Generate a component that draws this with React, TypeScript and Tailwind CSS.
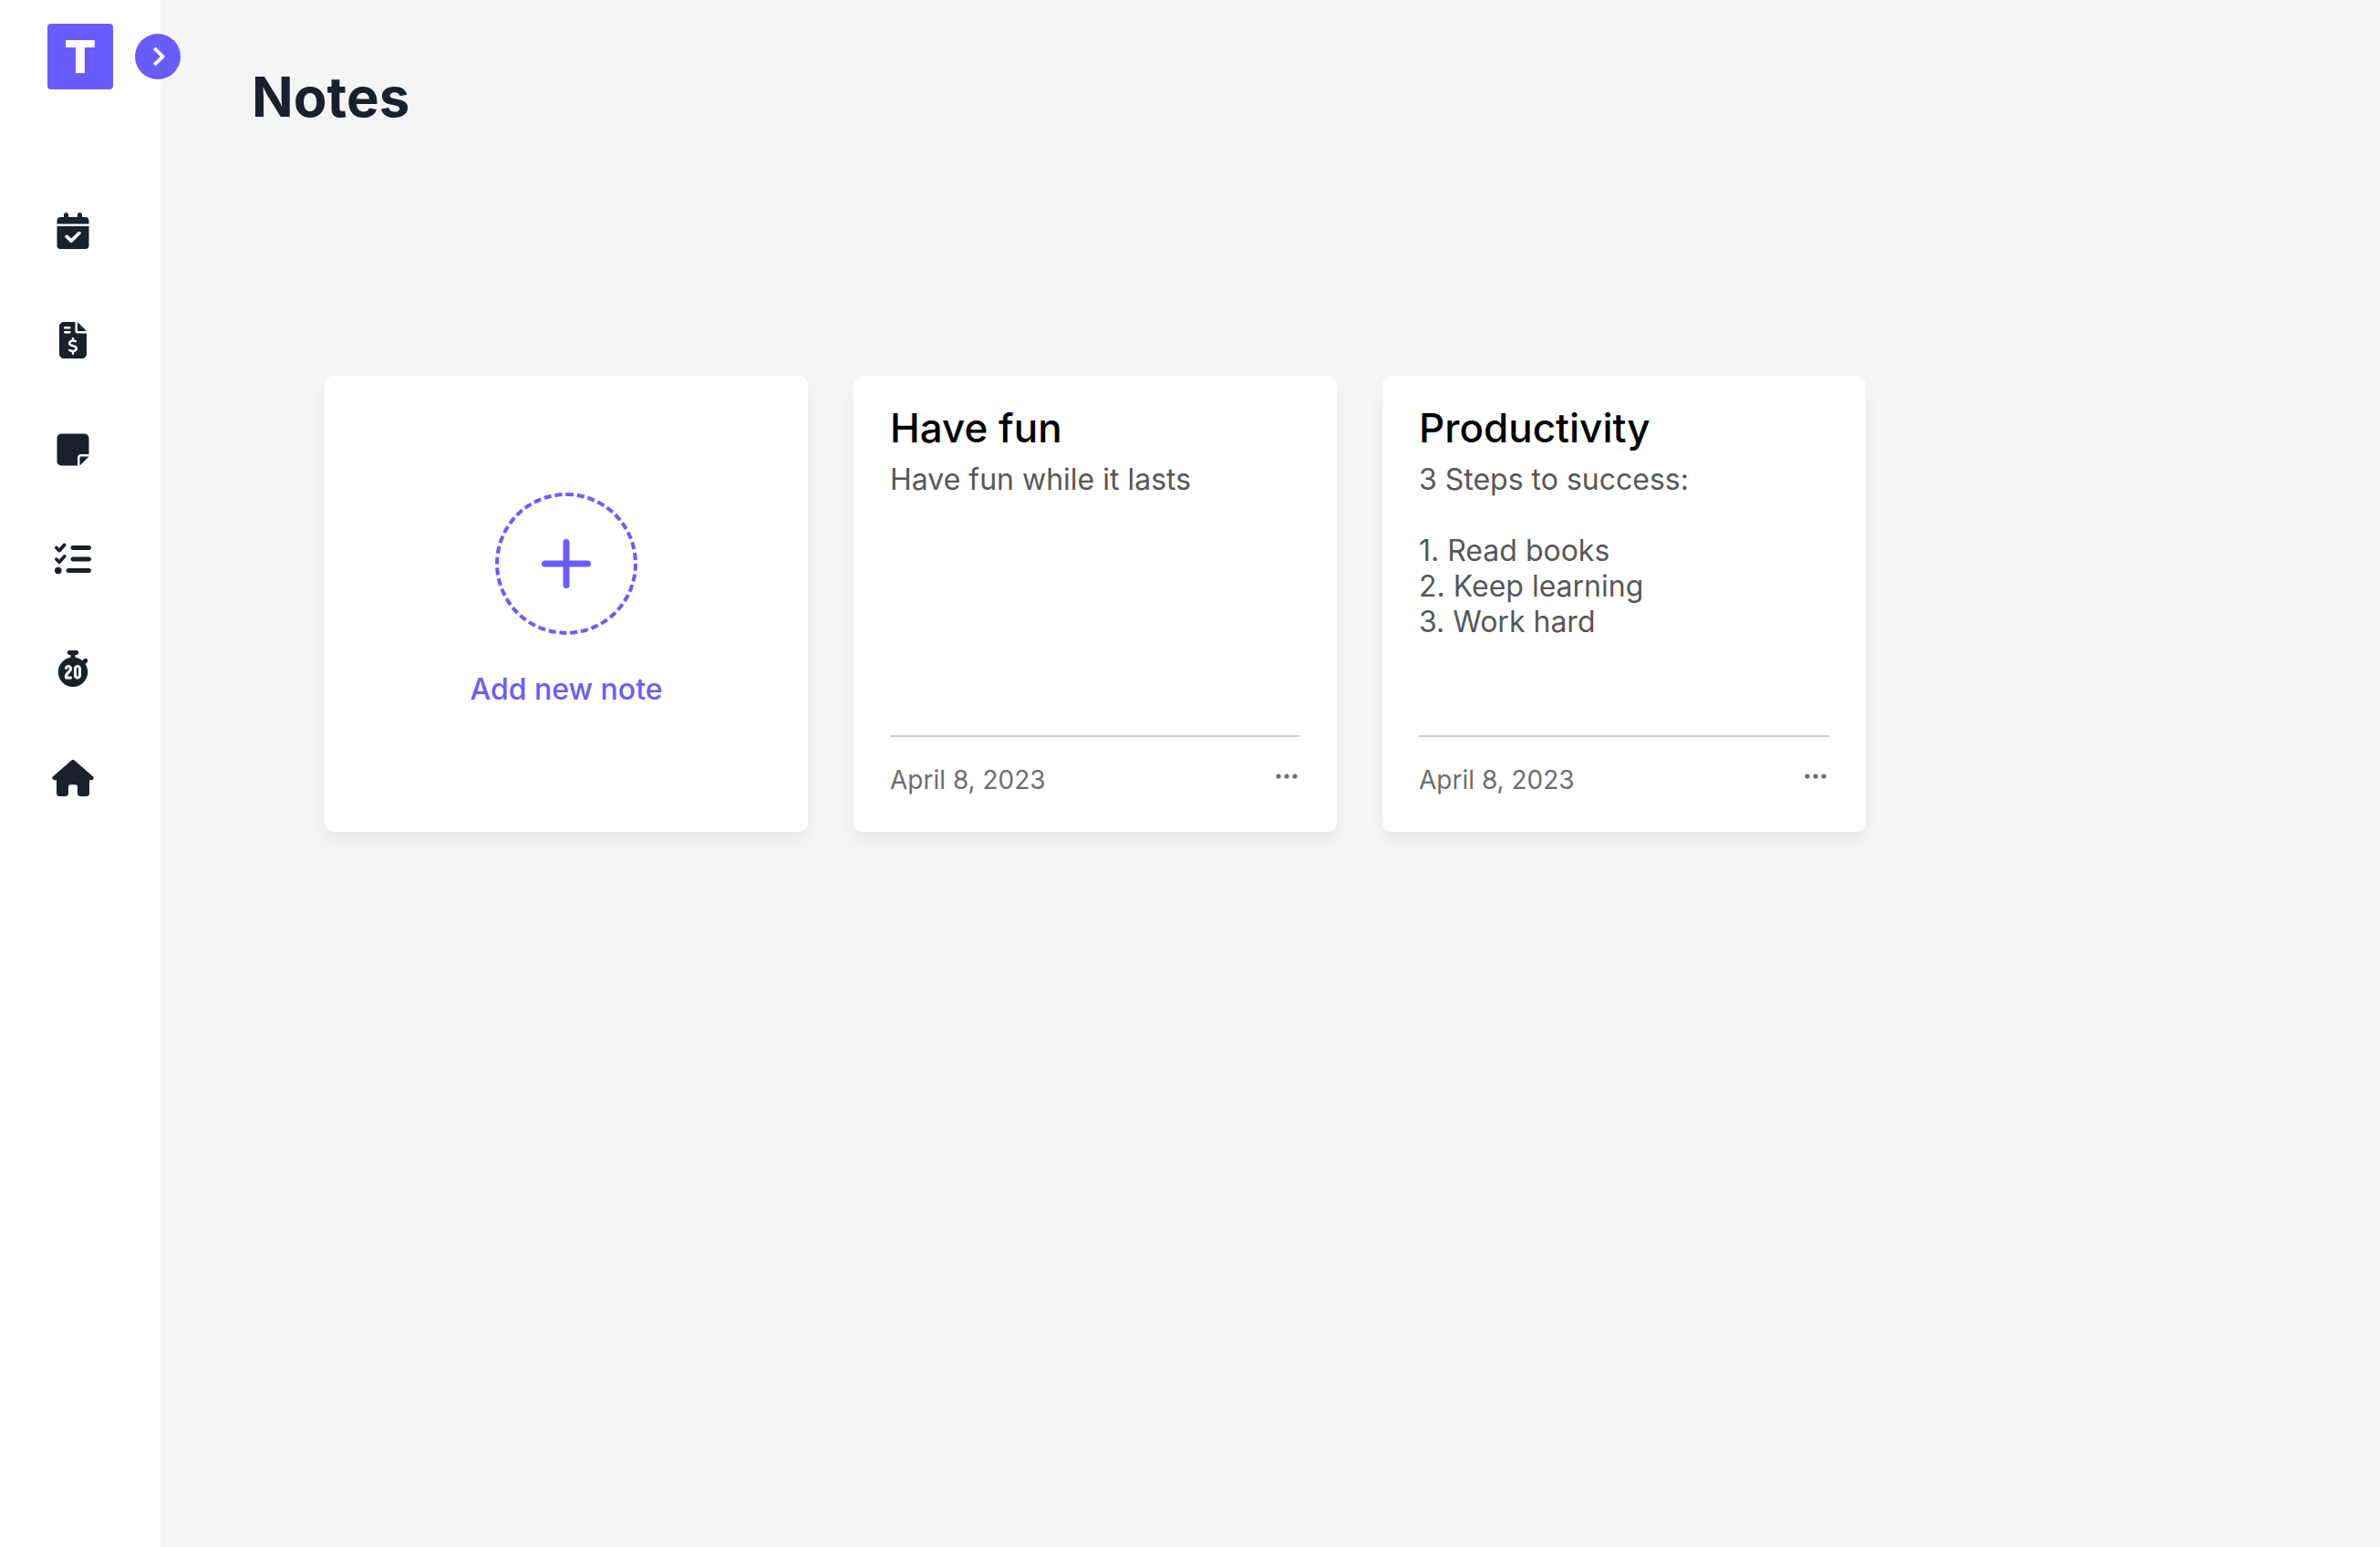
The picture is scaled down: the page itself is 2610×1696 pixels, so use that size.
import { FaCalendarCheck, FaFileInvoiceDollar, FaNoteSticky, FaListCheck, FaStopwatch20 } from "react-icons/fa6";
import type { ReactNode } from "react";

function HouseIcon() {
  return (
    <svg viewBox="0 0 46 40" fill="currentColor" className="h-10 w-[46px]">
      <path d="M21.2 0.7a2.8 2.8 0 0 1 3.6 0L44.9 18.2a2.3 2.3 0 0 1-1.5 4H41V36.6a3.4 3.4 0 0 1-3.4 3.4H31.4a3.4 3.4 0 0 1-3.4-3.4V29.5a2.2 2.2 0 0 0-2.200-2.200h-5.600a2.200 2.200 0 0 0-2.200 2.200V36.600A3.400 3.400 0 0 1 14.600 40H8.400a3.400 3.400 0 0 1-3.400-3.400V22.200H2.600A2.300 2.300 0 0 1 1.100 18.200Z" />
    </svg>
  );
}

const links: { label: string; icon: ReactNode }[] = [
  { label: "Calendar", icon: <FaCalendarCheck size={40} /> },
  { label: "Budget", icon: <FaFileInvoiceDollar size={40} /> },
  { label: "Notes", icon: <FaNoteSticky size={40} /> },
  { label: "Tasks", icon: <FaListCheck size={40} /> },
  { label: "Timer", icon: <FaStopwatch20 size={40} /> },
  { label: "Home", icon: <HouseIcon /> },
];

const notes = [
  { title: "Have fun", body: "Have fun while it lasts", date: "April 8, 2023" },
  {
    title: "Productivity",
    body: "3 Steps to success:\n\n1. Read books\n2. Keep learning\n3. Work hard",
    date: "April 8, 2023",
  },
];

function Sidebar() {
  return (
    <aside className="relative w-44 shrink-0 bg-white">
      <div className="flex h-[124px] items-center pl-[52px]">
        <span className="flex size-[72px] items-center justify-center rounded-sm bg-[#695cfe] text-[50px] leading-none font-black text-white">
          T
        </span>
      </div>
      <button
        type="button"
        aria-label="Expand sidebar"
        className="absolute top-[37px] -right-[22px] flex size-[50px] items-center justify-center rounded-full bg-[#695cfe] text-white"
      >
        <svg viewBox="0 0 24 24" fill="currentColor" className="size-11">
          <path d="M10.707 17.707 16.414 12l-5.707-5.707-1.414 1.414L13.586 12l-4.293 4.293z" />
        </svg>
      </button>
      <nav className="mt-[79px] flex flex-col gap-5 pr-4">
        {links.map((link) => (
          <a key={link.label} href="#" aria-label={link.label} className="flex h-[100px] items-center justify-center">
            {link.icon}
          </a>
        ))}
      </nav>
    </aside>
  );
}

function AddNoteCard() {
  return (
    <button
      type="button"
      className="flex h-[500px] flex-col items-center justify-center gap-10 rounded-[10px] bg-white pb-2.5 text-[#695cfe] shadow-[0_10px_20px_rgba(0,0,0,0.05)]"
    >
      <span className="flex size-[156px] items-center justify-center rounded-full border-4 border-dashed border-[#695cfe]">
        <svg viewBox="0 0 54 54" fill="none" stroke="currentColor" strokeWidth="7" strokeLinecap="round" className="size-[54px]">
          <path d="M27 3.500V50.500M3.500 27H50.500" />
        </svg>
      </span>
      <span className="text-[32px] leading-[39px] font-medium">Add new note</span>
    </button>
  );
}

function NoteCard({ title, body, date }: { title: string; body: string; date: string }) {
  return (
    <article className="flex h-[500px] flex-col rounded-[10px] bg-white px-10 pt-[31px] pb-10 shadow-[0_10px_20px_rgba(0,0,0,0.05)]">
      <h2 className="text-[44px] leading-[53px] font-medium text-black">{title}</h2>
      <p className="mt-2.5 flex-1 text-[32px] leading-[39px] whitespace-pre-wrap text-[#575757]">{body}</p>
      <footer className="flex items-center justify-between border-t-2 border-[#cccccc] pt-[30px] text-[#6d6d6d]">
        <time dateTime="2023-04-08" className="text-[28px] leading-[34px]">
          {date}
        </time>
        <button type="button" aria-label="Note options" className="flex h-[34px] w-[30px] items-start justify-center pt-2.5">
          <svg viewBox="0 0 24 6" fill="currentColor" className="h-1.5 w-6">
            <circle cx="3" cy="3" r="2.6" />
            <circle cx="12" cy="3" r="2.6" />
            <circle cx="21" cy="3" r="2.6" />
          </svg>
        </button>
      </footer>
    </article>
  );
}

export default function App() {
  return (
    <div className="flex min-h-screen bg-[#f5f5f5] font-[Inter,sans-serif] text-[#1a202c]">
      <Sidebar />
      <main className="flex-1 pl-[100px]">
        <h1 className="pt-[70px] text-[60px] leading-[73px] font-bold">Notes</h1>
        <section className="mt-[269px] grid grid-cols-[repeat(auto-fill,530px)] gap-[50px] px-20">
          <AddNoteCard />
          {notes.map((note) => (
            <NoteCard key={note.title} {...note} />
          ))}
        </section>
      </main>
    </div>
  );
}
